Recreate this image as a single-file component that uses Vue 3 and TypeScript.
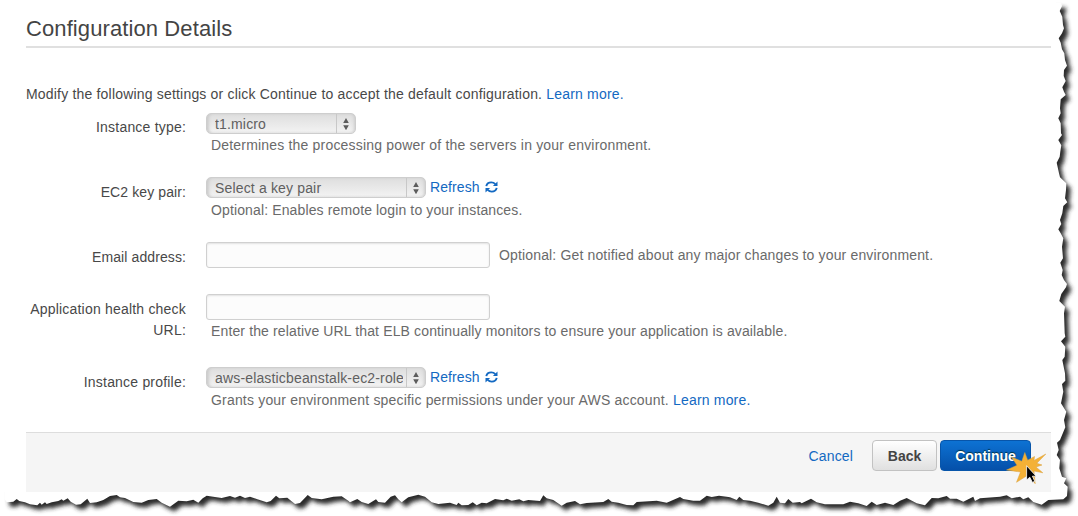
<script setup lang="ts">
type Point = [number, number]
interface Row {
  id: string
  label: string
  select?: string
  narrow?: boolean
  refresh?: boolean
  help: string
  inlineHelp?: boolean
  more?: boolean
}

const rows: Row[] = [
  { id: 'type', label: 'Instance type:', select: 't1.micro', narrow: true, help: 'Determines the processing power of the servers in your environment.' },
  { id: 'key', label: 'EC2 key pair:', select: 'Select a key pair', refresh: true, help: 'Optional: Enables remote login to your instances.' },
  { id: 'email', label: 'Email address:', help: 'Optional: Get notified about any major changes to your environment.', inlineHelp: true },
  { id: 'health', label: 'Application health check URL:', help: 'Enter the relative URL that ELB continually monitors to ensure your application is available.' },
  { id: 'profile', label: 'Instance profile:', select: 'aws-elasticbeanstalk-ec2-role', refresh: true, help: 'Grants your environment specific permissions under your AWS account.', more: true },
]

// Torn paper outline, in thirds of a pixel from each section's origin.
function section(x: number, y: number, points: Point[]): Point[] {
  return points.map(([px, py]): Point => [x + px / 3, y + py / 3])
}

const rightEdge: Point[] = [
  ...section(1000, 0, [[183, 8], [186, 18], [179, 33], [187, 50], [189, 75], [192, 85], [186, 100], [176, 115], [182, 128], [186, 148], [193, 160], [195, 180], [201, 197], [192, 210], [191, 228], [197, 243], [187, 262], [192, 275], [197, 285], [182, 298], [180, 325], [182, 340], [175, 355], [182, 370], [183, 400], [186, 405], [175, 420], [184, 436], [181, 455], [179, 470], [170, 488], [175, 510]]),
  ...section(1000, 170, [[177, 10], [180, 22], [199, 40], [198, 60], [195, 85], [202, 97], [190, 108], [187, 130], [180, 150], [184, 162], [175, 178], [182, 190], [190, 205], [186, 230], [189, 265], [181, 278], [188, 300], [185, 315], [192, 330], [201, 342], [198, 352], [184, 372], [178, 393], [195, 410], [192, 430], [194, 490], [196, 500]]),
  ...section(1000, 340, [[183, 4], [196, 20], [194, 50], [187, 60], [195, 100], [196, 122], [186, 132], [190, 155], [183, 190], [199, 215], [192, 240], [196, 262], [180, 300], [171, 308], [176, 330], [170, 345], [180, 360], [178, 385], [186, 410], [199, 415], [192, 430], [203, 440], [201, 468], [190, 478]]),
]

const bottomEdge: Point[] = [
  ...section(0, 470, [[14, 88], [20, 97], [40, 95], [50, 87], [58, 93], [75, 97], [90, 103], [112, 106], [120, 98], [125, 104], [135, 97], [140, 102], [155, 97], [175, 93], [185, 88], [190, 92], [203, 85], [212, 95], [228, 104], [242, 103], [262, 86], [270, 99], [290, 97], [310, 90], [330, 78], [350, 75], [360, 82], [375, 84], [400, 96], [425, 98], [445, 90], [470, 87], [485, 98], [510, 110], [535, 92], [560, 94], [580, 89], [595, 98], [608, 85], [620, 77], [640, 80], [665, 84], [690, 78], [705, 83], [720, 77], [735, 84], [750, 80], [770, 87], [800, 97], [812, 93], [828, 77], [838, 85], [862, 83], [885, 102], [900, 99], [923, 75], [935, 84], [965, 88], [1000, 80], [1025, 79], [1045, 92]]),
  ...section(350, 470, [[0, 97], [22, 87], [35, 96], [55, 102], [78, 88], [85, 96], [105, 98], [122, 80], [135, 76], [145, 88], [155, 97], [175, 82], [205, 74], [225, 80], [245, 97], [265, 102], [300, 98], [320, 105], [325, 98], [335, 106], [355, 105], [368, 97], [380, 106], [395, 98], [410, 100], [435, 87], [460, 91], [470, 86], [485, 92], [508, 88], [520, 94], [535, 90], [570, 93], [580, 76], [590, 85], [610, 90], [635, 107], [650, 98], [675, 93], [690, 103], [710, 99], [760, 96], [775, 87], [785, 95], [805, 98], [830, 105], [850, 106], [860, 96], [920, 92], [950, 98], [990, 81], [1000, 87], [1030, 92]]),
  ...section(700, 470, [[0, 92], [20, 77], [35, 81], [57, 77], [80, 80], [90, 82], [110, 90], [118, 80], [130, 90], [150, 92], [175, 98], [205, 107], [220, 98], [230, 80], [240, 98], [255, 100], [265, 87], [278, 98], [300, 96], [305, 100], [333, 86], [350, 97], [375, 103], [430, 103], [450, 95], [475, 100], [500, 108], [515, 95], [530, 105], [555, 98], [580, 105], [600, 92], [620, 84], [650, 100], [675, 106], [695, 84], [715, 85], [740, 78], [750, 86], [770, 86], [790, 95], [820, 80], [825, 93], [840, 85], [900, 80], [920, 76], [935, 85], [960, 80], [970, 88], [985, 82], [1000, 96], [1025, 104], [1045, 90]]),
]

const outline = [[4, 1] as Point, ...rightEdge, ...[...bottomEdge].reverse()]
const paperPath = 'M' + outline.map(([x, y]) => `${x.toFixed(1)} ${y.toFixed(1)}`).join('L') + 'Z'
</script>

<template>
  <main class="page">
    <svg class="paper" width="1078" height="516" viewBox="0 0 1078 516" aria-hidden="true">
      <defs>
        <filter id="soft" x="-2%" y="-2%" width="104%" height="106%"><feGaussianBlur stdDeviation="2.1" /></filter>
      </defs>
      <path :d="paperPath" transform="translate(4.3 4.8)" fill="#2c2c2c" filter="url(#soft)" />
      <path :d="paperPath" fill="#fff" />
      <path d="M0 0H1056V492H0Z" fill="#fff" />
    </svg>
    <div class="content">
      <h1>Configuration Details</h1>
      <p class="intro">Modify the following settings or click Continue to accept the default configuration. <a class="intro-link">Learn more.</a></p>
      <form class="form" @submit.prevent>
        <div v-for="row in rows" :key="row.id" class="row" :class="row.id">
          <label>{{ row.label }}</label>
          <div class="field">
            <div class="control">
              <div v-if="row.select" class="select" :class="{ narrow: row.narrow }">
                <span class="value">{{ row.select }}</span>
                <span class="arrows"><svg width="8" height="14" viewBox="0 0 8 14"><path d="M4 .9 6.8 6H1.2ZM1.2 8.2H6.8L4 13.3Z" fill="#5c5c5c" /></svg></span>
              </div>
              <input v-else type="text" :aria-label="row.label" />
              <a v-if="row.refresh" class="refresh">
                <span>Refresh</span>
                <svg width="13" height="12" viewBox="0 0 13 12">
                  <path d="M1.3 5.1C1.8 2.7 3.9 1.4 6.3 1.4c1.7 0 3 .7 4 1.8M11.7 6.9c-.5 2.4-2.6 3.7-5 3.7-1.7 0-3-.7-4-1.8" fill="none" stroke="#1369c2" stroke-width="1.9" />
                  <path d="M12.5.4V5H7.9ZM.5 11.6V7h4.6Z" fill="#1369c2" />
                </svg>
              </a>
              <span v-if="row.inlineHelp" class="inline-help">{{ row.help }}</span>
            </div>
            <p v-if="!row.inlineHelp" class="help">{{ row.help }} <a v-if="row.more">Learn more.</a></p>
          </div>
        </div>
      </form>
      <footer>
        <a class="cancel">Cancel</a>
        <button type="button" class="back">Back</button>
        <button type="button" class="continue">Continue</button>
      </footer>
    </div>
    <svg class="click" width="44" height="38" viewBox="1006 450 44 38" aria-hidden="true">
      <path d="M1006.5 470 1017 465.3 1011.5 457 1021.8 461.3 1024.8 452.5 1027.7 460.2 1034.5 456.5 1034 460.5 1045.8 454 1036.8 463.3 1042 465 1036 467 1042.8 472.8 1034 471 1035.2 483.7 1028 475 1016.5 482.3 1020.5 472 1006.5 470Z" fill="#f4b136" stroke="#d9a03e" stroke-width=".5" />
      <path d="M1026.6 465.7V480l3.2-2.8 2.6 5.2 2.4-1.1-2.4-5.1h3.8Z" fill="#000" stroke="#fff" stroke-width=".8" />
    </svg>
  </main>
</template>

<style>
body { margin: 0; background: #fff; }
</style>

<style scoped>
.page { position: relative; width: 1078px; height: 516px; overflow: hidden; font: 14px/20px "Liberation Sans", Arial, sans-serif; color: #484848; }
.paper { position: absolute; left: 0; top: 0; }
.content { position: relative; width: 1025px; margin-left: 26px; display: flex; flex-direction: column; }
h1 { box-sizing: border-box; height: 48px; margin: 0; padding-top: 15px; border-bottom: 2px solid #e0e0e0; font-size: 22px; line-height: 28px; font-weight: 400; letter-spacing: .1px; color: #444; white-space: nowrap; }
a { color: #1369c2; }
.intro { margin: 36px 0 0; height: 29px; letter-spacing: .188px; white-space: nowrap; }
.form { height: 319px; display: flex; flex-direction: column; }
.row { display: flex; gap: 20px; height: 64px; flex: none; }
.row.email { height: 52px; }
.row.health { height: 74px; }
label { width: 160px; padding-top: 5px; text-align: right; line-height: 20px; letter-spacing: .2px; }
.type label { padding-top: 4px; }
.key label, .email label { letter-spacing: .1px; }
.email label, .health label { padding-top: 6px; line-height: 21px; }
.control { display: flex; align-items: flex-start; height: 22px; }
.email .control, .health .control { height: 28px; }
.select { box-sizing: border-box; display: flex; width: 220px; height: 21px; border: 1px solid #cecece; border-radius: 5px; background: linear-gradient(#dedede, #f3f3f3); box-shadow: inset 3px 0 3px -1px #ccc, inset -2px 0 3px -1px #ccc; overflow: hidden; }
.select.narrow { width: 150px; }
.value { flex: 1; margin-left: 8px; margin-right: 3px; line-height: 20px; letter-spacing: .16px; white-space: nowrap; overflow: hidden; color: #606060; }
.arrows { width: 18px; border-left: 1px solid #c8c8c8; display: flex; justify-content: center; align-items: center; }
input { box-sizing: border-box; width: 284px; height: 26px; margin: 1px 0 0; border: 1px solid #d0d0d0; border-radius: 3px; background: #fcfcfc; box-shadow: inset 0 1px 2px #e2e2e2; padding: 0 6px; outline: 0; }
.refresh { display: flex; align-items: center; gap: 5px; margin-left: 4px; height: 20px; letter-spacing: .1px; }
.inline-help { margin-left: 9px; line-height: 29px; letter-spacing: .15px; color: #6a6a6a; white-space: nowrap; }
.help { margin: 0 0 0 5px; color: #6a6a6a; line-height: 22px; letter-spacing: .185px; white-space: nowrap; }
.type .help { line-height: 20px; }
.key .help { letter-spacing: .13px; }
.health .help { line-height: 21px; letter-spacing: .137px; }
footer { box-sizing: border-box; height: 60px; border-top: 1px solid #ddd; background: #f5f5f5; display: flex; justify-content: flex-end; align-items: flex-start; padding: 7px 20px 0 0; }
.cancel { margin: 6px 19px 0 0; letter-spacing: .15px; }
button { box-sizing: border-box; height: 31px; border-radius: 4px; font: bold 14px/20px "Liberation Sans", Arial, sans-serif; padding: 1px 0 0; }
.back { width: 65px; margin-right: 3px; border: 1px solid #c2c2c2; color: #444; background: linear-gradient(#fff, #e0e0e0); }
.continue { width: 91px; border: 1px solid #0755aa; color: #fff; background: linear-gradient(#0d72d3, #0550a9); text-shadow: 0 -1px 1px #034; }
.click { position: absolute; left: 1006px; top: 450px; }
</style>
